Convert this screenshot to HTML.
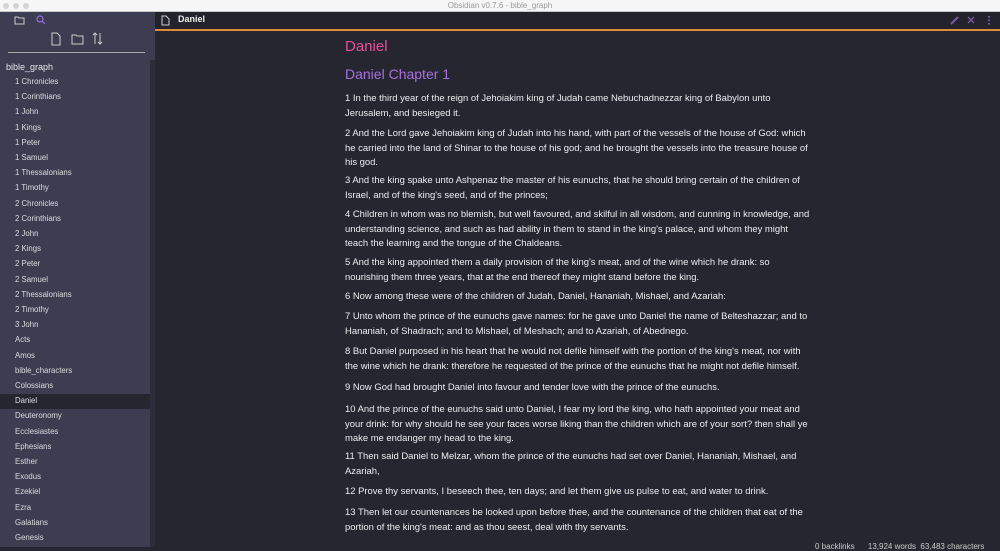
<!DOCTYPE html><html><head><style>
*{margin:0;padding:0;box-sizing:border-box}
body{width:1000px;height:547px;overflow:hidden;background:#262630;font-family:"Liberation Sans",sans-serif;position:relative}
.title{position:absolute;top:0;left:0;width:1000px;height:12px;background:#f6f6f6;border-bottom:1px solid #c8c8c8;color:#999;font-size:8px;text-align:center;line-height:12px}
.dot{position:absolute;top:3px;width:6px;height:6px;border-radius:50%;background:#d4d4d4}
.side{position:absolute;left:0;top:12px;width:155px;height:535px;background:#3c3d50}
.tabs{position:absolute;left:0;top:12px;width:1000px;height:17px;background:#22232c}
.ftab{position:absolute;left:8px;top:12px;width:22px;height:17px;background:#3c3d50;border-radius:3px 3px 0 0}
.orange{position:absolute;left:155px;top:29px;width:845px;height:2px;background:#e08a3c}
.scroll{position:absolute;left:150px;top:60px;width:5px;height:487px;background:#2c2d3a}
.item{position:absolute;left:15px;font-size:7.8px;color:#dcdce2;white-space:nowrap}
.sel{position:absolute;left:0;top:394px;width:150px;height:15px;background:#262630}
.content{position:absolute;left:345px;top:0;color:#ececf0;font-size:9.45px;line-height:14.6px}
.content p{position:absolute;left:0;white-space:nowrap}
h1{position:absolute;left:345px;top:38px;font-size:15px;color:#e84f9b;font-weight:normal}
h2{position:absolute;left:345px;top:66px;font-size:14px;color:#a970e0;font-weight:normal}
</style></head><body>
<div class="title">Obsidian v0.7.6 - bible_graph</div>
<div class="dot" style="left:3px"></div><div class="dot" style="left:13px"></div><div class="dot" style="left:23px"></div>
<div class="tabs"></div>
<div class="side"></div>
<div class="ftab"></div>
<svg style="position:absolute;left:14px;top:15px" width="11" height="10"><path d="M1 2h3l1 1h5v6H1z" fill="none" stroke="#ccc" stroke-width="1"/></svg>
<svg style="position:absolute;left:36px;top:15px" width="10" height="10"><circle cx="4" cy="4" r="3" fill="none" stroke="#9a6ee0" stroke-width="1.2"/><path d="M6 6l3 3" stroke="#9a6ee0" stroke-width="1.2"/></svg>
<svg style="position:absolute;left:50px;top:32px" width="60" height="14"><path d="M2 1h5l3 3v9H2z" fill="none" stroke="#ccc"/><path d="M22 3h4l1 1h6v8h-11z" fill="none" stroke="#ccc"/><path d="M45 1v11M43 3l2-2 2 2M50 12V1M48 10l2 2 2-2" fill="none" stroke="#ccc"/></svg>
<div style="position:absolute;left:8px;top:52px;width:137px;height:1px;background:#aaa"></div>
<div style="position:absolute;left:6px;top:62px;font-size:9px;color:#e6e6ea">bible_graph</div>
<div class="sel"></div>
<div class="scroll"></div>
<div id="items"></div>
<svg style="position:absolute;left:161px;top:15px" width="9" height="11"><path d="M1 1h4l3 3v6H1z" fill="none" stroke="#ccc"/></svg>
<div style="position:absolute;left:178px;top:14px;font-size:9px;font-weight:bold;color:#eee">Daniel</div>
<svg style="position:absolute;left:948px;top:14px" width="48" height="12"><path d="M3 10l7-7" stroke="#7a5aa8" stroke-width="2"/><path d="M20 3l6 6M26 3l-6 6" stroke="#7a5aa8" stroke-width="1.3"/><path d="M41 2v1.5M41 5.5v1.5M41 9v1.5" stroke="#7a5aa8" stroke-width="2"/></svg>
<div class="orange"></div>
<h1>Daniel</h1>
<h2>Daniel Chapter 1</h2>
<div class="content">
<p style="top:92px">1 In the third year of the reign of Jehoiakim king of Judah came Nebuchadnezzar king of Babylon unto<br>Jerusalem, and besieged it.</p>
<p style="top:127px">2 And the Lord gave Jehoiakim king of Judah into his hand, with part of the vessels of the house of God: which<br>he carried into the land of Shinar to the house of his god; and he brought the vessels into the treasure house of<br>his god.</p>
<p style="top:174px">3 And the king spake unto Ashpenaz the master of his eunuchs, that he should bring certain of the children of<br>Israel, and of the king's seed, and of the princes;</p>
<p style="top:208px">4 Children in whom was no blemish, but well favoured, and skilful in all wisdom, and cunning in knowledge, and<br>understanding science, and such as had ability in them to stand in the king's palace, and whom they might<br>teach the learning and the tongue of the Chaldeans.</p>
<p style="top:256px">5 And the king appointed them a daily provision of the king's meat, and of the wine which he drank: so<br>nourishing them three years, that at the end thereof they might stand before the king.</p>
<p style="top:290px">6 Now among these were of the children of Judah, Daniel, Hananiah, Mishael, and Azariah:</p>
<p style="top:310px">7 Unto whom the prince of the eunuchs gave names: for he gave unto Daniel the name of Belteshazzar; and to<br>Hananiah, of Shadrach; and to Mishael, of Meshach; and to Azariah, of Abednego.</p>
<p style="top:345px">8 But Daniel purposed in his heart that he would not defile himself with the portion of the king's meat, nor with<br>the wine which he drank: therefore he requested of the prince of the eunuchs that he might not defile himself.</p>
<p style="top:381px">9 Now God had brought Daniel into favour and tender love with the prince of the eunuchs.</p>
<p style="top:403px">10 And the prince of the eunuchs said unto Daniel, I fear my lord the king, who hath appointed your meat and<br>your drink: for why should he see your faces worse liking than the children which are of your sort? then shall ye<br>make me endanger my head to the king.</p>
<p style="top:450px">11 Then said Daniel to Melzar, whom the prince of the eunuchs had set over Daniel, Hananiah, Mishael, and<br>Azariah,</p>
<p style="top:485px">12 Prove thy servants, I beseech thee, ten days; and let them give us pulse to eat, and water to drink.</p>
<p style="top:506px">13 Then let our countenances be looked upon before thee, and the countenance of the children that eat of the<br>portion of the king's meat: and as thou seest, deal with thy servants.</p>
</div>
<div style="position:absolute;left:815px;top:542px;font-size:8px;color:#ccc;white-space:nowrap">0 backlinks &nbsp;&nbsp;&nbsp;&nbsp; 13,924 words &nbsp;63,483 characters</div>
<script>
var n=["1 Chronicles","1 Corinthians","1 John","1 Kings","1 Peter","1 Samuel","1 Thessalonians","1 Timothy","2 Chronicles","2 Corinthians","2 John","2 Kings","2 Peter","2 Samuel","2 Thessalonians","2 Timothy","3 John","Acts","Amos","bible_characters","Colossians","Daniel","Deuteronomy","Ecclesiastes","Ephesians","Esther","Exodus","Ezekiel","Ezra","Galatians","Genesis"];
var h="";n.forEach(function(s,i){h+='<div class="item" style="top:'+(77+i*15.2)+'px">'+s+'</div>'});
document.getElementById("items").innerHTML=h;
</script>
</body></html>
